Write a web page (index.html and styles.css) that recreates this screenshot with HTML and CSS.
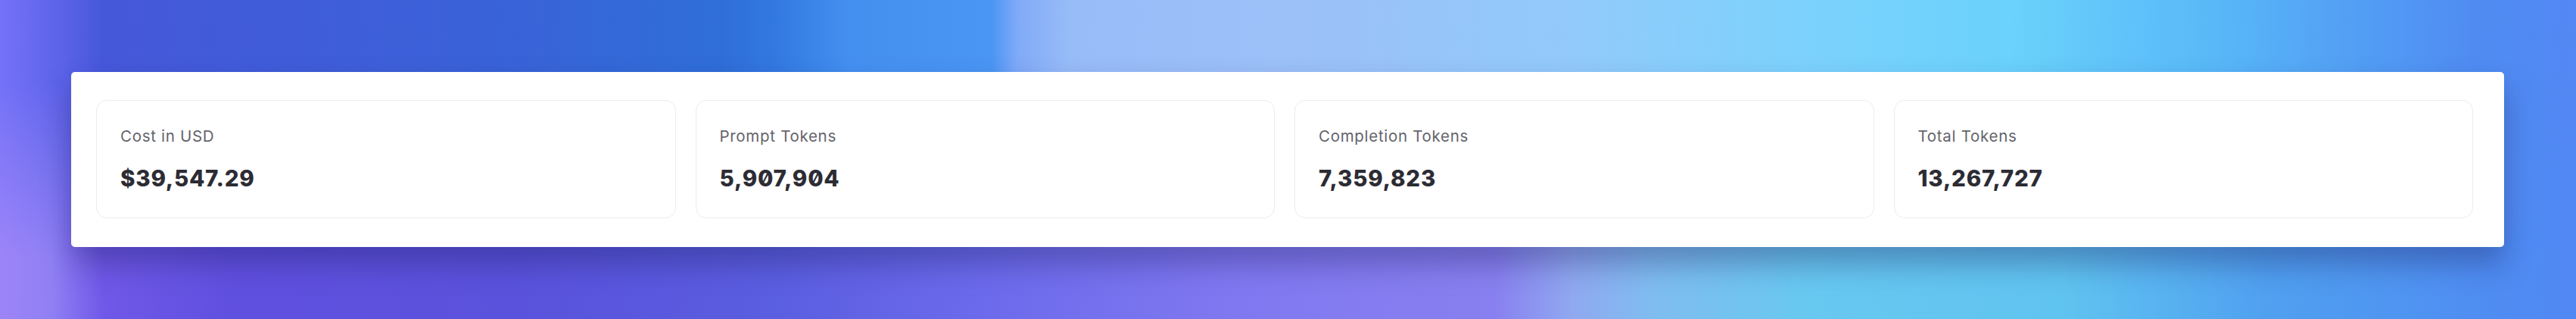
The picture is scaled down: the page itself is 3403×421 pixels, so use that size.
FILE: index.html
```html
<!DOCTYPE html>
<html lang="en">
<head>
    <meta charset="UTF-8">
    <meta name="viewport" content="width=device-width, initial-scale=1.0">
    <title>Usage</title>
    <link rel="stylesheet" href="styles.css">
</head>
<body>
    <div class="backdrop">
        <div class="panel">
            <div class="stats">
                <div class="stat">
                    <div class="stat-label">Cost in USD</div>
                    <div class="stat-value">$39,547.29</div>
                </div>
                <div class="stat">
                    <div class="stat-label">Prompt Tokens</div>
                    <div class="stat-value">5,907,904</div>
                </div>
                <div class="stat">
                    <div class="stat-label">Completion Tokens</div>
                    <div class="stat-value">7,359,823</div>
                </div>
                <div class="stat">
                    <div class="stat-label">Total Tokens</div>
                    <div class="stat-value">13,267,727</div>
                </div>
            </div>
        </div>
    </div>
</body>
</html>
```

FILE: styles.css
```css
body {
    margin: 0;
    padding: 0;
    font-family: Inter, 'Noto Sans', sans-serif;
    color: #2c2c34;
}

.backdrop {
    position: relative;
    min-height: 421px;
    box-sizing: border-box;
    padding: 95px 95px 94px 94px;
    background: linear-gradient(to right,
        #7472f8 0%, #5a62e8 2.5%, #4658da 4%, #3a62d8 19%, #2f6ed8 28%,
        #3278e0 30%, #4490f0 33%, #4a96f4 38.5%, #80aaf8 39.5%, #98bcf8 41.5%,
        #9cc0f8 50%, #92cafb 61%, #7cd2fc 70%, #6ad2fb 78%, #58b8f8 86%,
        #529cf4 92%, #4f8cf2 96%, #5488f4 100%);
    overflow: hidden;
}

/* bottom half of the mesh, faded in from the top */
.backdrop::before {
    content: '';
    position: absolute;
    top: 0;
    left: 0;
    width: 100%;
    height: 100%;
    background: linear-gradient(to right,
        #9c84f8 0%, #9080f4 2%, #7058e8 4%, #6050e0 9%, #5a52dc 20%,
        #5a5ee0 30%, #6c6aec 38%, #8078f0 48%, #8880f0 58%, #90a8f0 61%,
        #80bcf0 64%, #68c8f0 70%, #60c4f0 80%, #50a0f0 88%, #4f8cf2 97%,
        #5288f4 100%);
    -webkit-mask-image: linear-gradient(to bottom, transparent 25%, #000 80%);
    mask-image: linear-gradient(to bottom, transparent 25%, #000 80%);
}

.panel {
    position: relative;
    background-color: #fff;
    border-radius: 5px;
    padding: 37px 41px 38px 33px;
    box-shadow: 0 22px 38px rgba(25, 25, 90, 0.35);
}

.stats {
    display: grid;
    grid-template-columns: repeat(4, 1fr);
    gap: 26px;
}

.stat {
    height: 156px;
    box-sizing: border-box;
    border: 1.5px solid #ececec;
    border-radius: 14px;
    padding: 33px 31px 0;
}

.stat-label {
    font-size: 20.5px;
    line-height: 28px;
    letter-spacing: 0.7px;
    color: #64646c;
}

.stat-value {
    margin-top: 23px;
    font-size: 29.5px;
    line-height: 36px;
    font-weight: 800;
    letter-spacing: 0.8px;
    font-variant-numeric: slashed-zero;
    color: #2c2c34;
}
```
